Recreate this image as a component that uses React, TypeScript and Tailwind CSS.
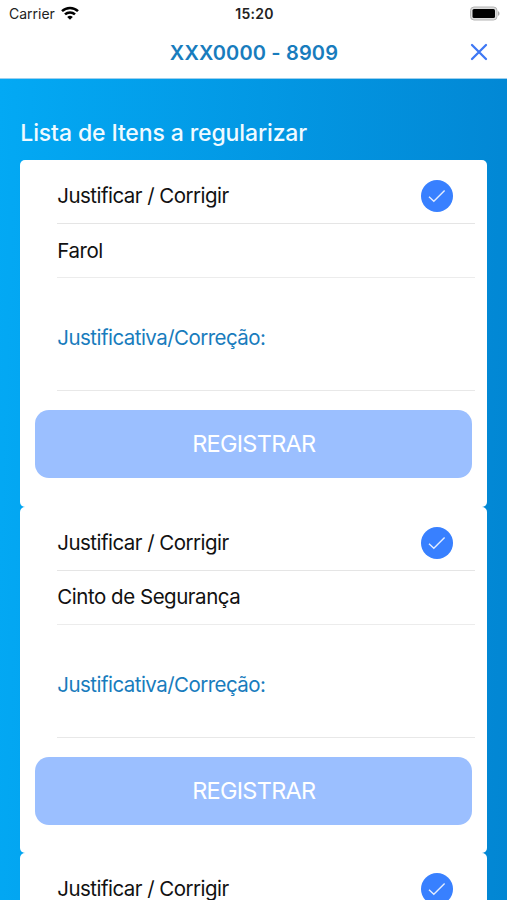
const items = [
    { id: 1, name: "Farol" },
    { id: 2, name: "Cinto de Segurança" },
    { id: 3 },
];

function StatusBar() {
    return (
        <div className="flex h-[27px] items-center justify-between pl-[9px] pr-[7px] text-[14px] text-[#222]">
            <div className="flex flex-1 items-center gap-[6px]">
                <span>Carrier</span>
                <svg className="mb-[2px]" width="18" height="14" viewBox="0 0 18 14" fill="none" stroke="#000" strokeWidth="2.5">
                    <path d="M1 5.2a11.5 11.5 0 0 1 16 0" />
                    <path d="M4 8.4a7.2 7.2 0 0 1 10 0" />
                    <path d="M9 13.8 6.2 11a4 4 0 0 1 5.6 0Z" fill="#000" stroke="none" />
                </svg>
            </div>
            <span className="text-[14px] font-semibold tracking-[0.3px]">15:20</span>
            <div className="flex flex-1 justify-end">
                <svg width="31" height="15" viewBox="0 0 31 15">
                    <rect x="1.5" y="1" width="26.5" height="13" rx="3.5" fill="#dcdcdc" stroke="#b4b4b4" />
                    <rect x="3.5" y="3" width="22.5" height="9" rx="1.5" fill="#000" />
                    <path d="M29 5.2c2 .6 2 4 0 4.6Z" fill="#aaa" />
                </svg>
            </div>
        </div>
    );
}

function Header() {
    return (
        <header className="flex h-[51px] items-center justify-between pl-[38px] pr-[19px]">
            <h1 className="flex-1 text-center text-[20px] font-semibold tracking-[0.15px] text-[#187cbd]">
                XXX0000 - 8909
            </h1>
            <button aria-label="Fechar" className="mb-[2px]">
                <svg width="18" height="18" viewBox="0 0 18 18" stroke="#3f78f4" strokeWidth="2.3" strokeLinecap="round">
                    <path d="M2 2l14 14M16 2 2 16" />
                </svg>
            </button>
        </header>
    );
}

function ItemCard({ name }: { name?: string }) {
    return (
        <div className="h-[346.5px] rounded-[5px] bg-white text-[20.5px] text-[#111]">
            <div className="ml-[37px] mr-[12px]">
                <div className="flex h-[64px] items-center justify-between border-b border-[#e5e5e5] pt-[10px] pr-[22px]">
                    <span className="tracking-[-0.53px]">Justificar / Corrigir</span>
                    <span className="mb-[1px] flex size-[32px] items-center justify-center rounded-full bg-[#3880ff]">
                        <svg width="18" height="14" viewBox="0 0 18 14" fill="none" stroke="#e4edff" strokeWidth="1.4">
                            <path d="M1 7.8 5.8 12.2 16.6 1.4" />
                        </svg>
                    </span>
                </div>
                {name && (
                    <>
                        <div className="flex h-[54px] items-center border-b border-[#ececec] pt-[1px]">
                            <span className="tracking-[-0.47px]">{name}</span>
                        </div>
                        <div className="flex h-[113px] items-center border-b border-[#e8e8e8] pt-[9px]">
                            <span className="tracking-[-0.54px] text-[#187cbd]">Justificativa/Correção:</span>
                        </div>
                    </>
                )}
            </div>
            {name && (
                <button className="mt-[19px] ml-[15px] block h-[68px] w-[437px] rounded-[14px] bg-[#9bbfff] text-[23.5px] tracking-[-0.72px] text-white">
                    REGISTRAR
                </button>
            )}
        </div>
    );
}

export default function App() {
    return (
        <div className="h-[900px] w-full overflow-hidden bg-white font-['Inter',sans-serif]">
            <StatusBar />
            <Header />
            <main className="h-[822px] overflow-hidden border-t border-[#9ccfee] bg-linear-[92deg,#03a9f4,#0286d3] px-[20.3px]">
                <h2 className="flex h-[81px] items-end pb-[12px] text-[23px] font-medium leading-[30px] tracking-[-0.12px] text-[#f0faff]">
                    Lista de Itens a regularizar
                </h2>
                {items.map((item) => (
                    <ItemCard key={item.id} name={item.name} />
                ))}
            </main>
        </div>
    );
}
